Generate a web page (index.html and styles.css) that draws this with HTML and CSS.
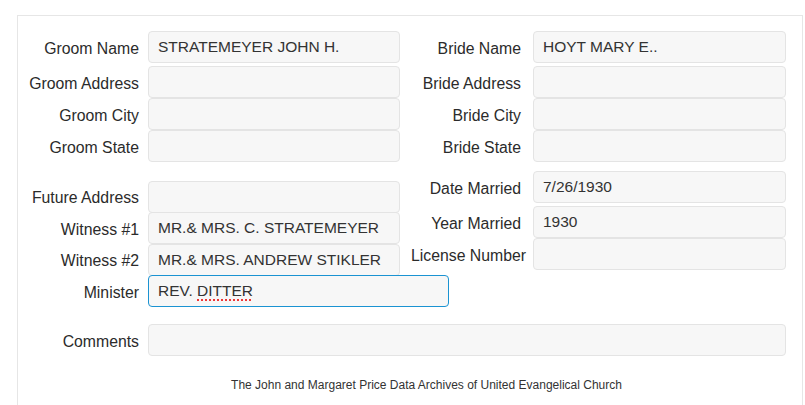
FILE: index.html
```html
<!DOCTYPE html>
<html lang="en">
<head>
    <meta charset="UTF-8">
    <meta name="viewport" content="width=device-width, initial-scale=1.0">
    <title>Marriage Record</title>
    <link rel="stylesheet" href="styles.css">
</head>
<body>
    <div class="panel">
        <div class="columns">
            <div class="col col-left">
                <div class="row first"><label>Groom Name</label><input class="field" type="text" value="STRATEMEYER JOHN H."></div>
                <div class="row"><label>Groom Address</label><input class="field" type="text"></div>
                <div class="row"><label>Groom City</label><input class="field" type="text"></div>
                <div class="row"><label>Groom State</label><input class="field" type="text"></div>
            </div>
            <div class="col col-right">
                <div class="row first"><label>Bride Name</label><input class="field" type="text" value="HOYT MARY E.."></div>
                <div class="row"><label>Bride Address</label><input class="field" type="text"></div>
                <div class="row"><label>Bride City</label><input class="field" type="text"></div>
                <div class="row"><label>Bride State</label><input class="field" type="text"></div>
            </div>
        </div>
        <div class="columns second">
            <div class="col col-left tight">
                <div class="row"><label>Future Address</label><input class="field" type="text"></div>
                <div class="row"><label>Witness #1</label><input class="field" type="text" value="MR.&amp; MRS. C. STRATEMEYER"></div>
                <div class="row"><label>Witness #2</label><input class="field" type="text" value="MR.&amp; MRS. ANDREW STIKLER"></div>
                <div class="row"><label>Minister</label><div class="field focused">REV. <span class="misspelt">DITTER</span></div></div>
            </div>
            <div class="col col-right">
                <div class="row first"><label>Date Married</label><input class="field" type="text" value="7/26/1930"></div>
                <div class="row"><label>Year Married</label><input class="field" type="text" value="1930"></div>
                <div class="row"><label>License Number</label><input class="field" type="text"></div>
            </div>
        </div>
        <div class="row comments"><label>Comments</label><input class="field" type="text"></div>
        <div class="footer">The John and Margaret Price Data Archives of United Evangelical Church</div>
    </div>
</body>
</html>
```

FILE: styles.css
```css
body {
    margin: 0;
    font-family: 'Liberation Sans', Arial, sans-serif;
    color: #333;
    background: #fff;
}
.panel {
    margin: 15px 2px 0 17px;
    padding: 15px 16px 20px 10px;
    border: 1px solid #e6e6e6;
    border-bottom: none;
}
.columns {
    display: flex;
    align-items: flex-start;
    gap: 11px;
}
.columns.second {
    margin-top: 9px;
}
.col-left {
    width: 372px;
}
.col-left.tight {
    padding-top: 10px;
}
.col-right {
    flex: 1;
}
.row {
    display: flex;
    align-items: center;
    height: 32px;
}
.row.first {
    margin-bottom: 3px;
}
.tight .row {
    height: 31.5px;
}
label {
    flex: none;
    width: 111px;
    margin-right: 9px;
    padding-top: 3px;
    text-align: right;
    white-space: nowrap;
    font-size: 15.8px;
    color: #2b2b2b;
}
.col-right label {
    width: 110px;
    margin-right: 12px;
}
.field {
    box-sizing: border-box;
    width: 252px;
    height: 32px;
    flex: none;
    margin: 0;
    padding: 0 9px;
    border: 1px solid #e4e4e4;
    border-radius: 4px;
    background: #f7f7f7;
    font-family: inherit;
    font-size: 15.5px;
    color: #333;
    outline: none;
}
.col-right .field {
    width: 253px;
}
.field.focused {
    width: 301px;
    display: flex;
    align-items: center;
    white-space: pre;
    border-color: #1b93d2;
}
.misspelt {
    text-decoration: underline dotted #e00;
    text-underline-offset: 3px;
}
.row.comments {
    margin-top: 17px;
}
.comments .field {
    flex: 1;
    width: auto;
}
.footer {
    margin-top: 22px;
    padding-left: 39px;
    text-align: center;
    font-size: 12px;
    line-height: 14px;
}
```
